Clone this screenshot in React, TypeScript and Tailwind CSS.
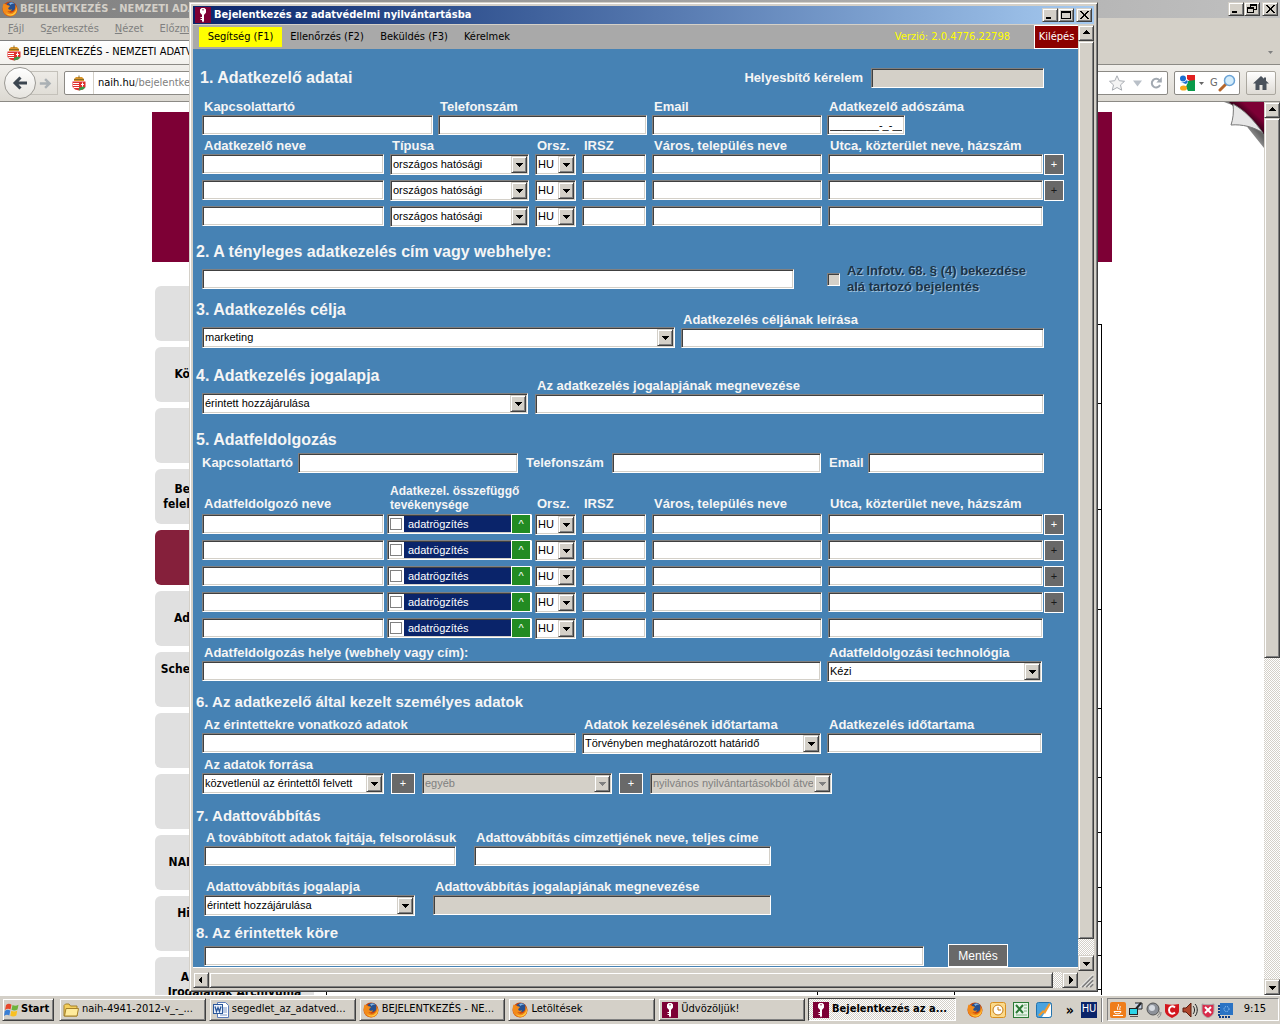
import type { ReactNode } from "react";

const tahoma = "font-['DejaVu_Sans_Condensed','Noto_Sans',sans-serif]";
const sunken =
  "border border-t-[#808080] border-l-[#808080] border-r-white border-b-white shadow-[inset_1px_1px_0_#404040,inset_-1px_-1px_0_#d4d0c8]";
const raised =
  "border border-t-[#d4d0c8] border-l-[#d4d0c8] border-r-[#404040] border-b-[#404040] shadow-[inset_1px_1px_0_#fff,inset_-1px_-1px_0_#808080] bg-[#d4d0c8]";
const dither = "bg-[repeating-conic-gradient(#fff_0_25%,#d4d0c8_0_50%)] bg-[length:2px_2px]";
const formGrid = "grid grid-cols-[182px_139px_41px_64px_170px_1fr] gap-x-[6px]";

/* ---------- icons ---------- */

const KeyIcon = () => (
  <svg viewBox="0 0 16 16" className="h-4 w-4 shrink-0" aria-hidden="true">
    <rect width="16" height="16" fill="#7d0035" />
    <path d="M6.500 1h3L11 2.500v3L9.500 7.500H9V14l-1 1.500L7 14v-1H5.500v-1H7v-1H5.500v-1H7V7.500H6.500L5 5.500v-3z" fill="#fff" />
    <rect x="7.500" y="2" width="1" height="1.500" fill="#7d0035" />
  </svg>
);

const FirefoxIcon = () => (
  <svg viewBox="0 0 16 16" className="h-4 w-4 shrink-0" aria-hidden="true">
    <circle cx="8" cy="8" r="7.500" fill="#c8470c" />
    <circle cx="9" cy="5.500" r="4.600" fill="#27508f" />
    <path d="M7 2c2-1 4.500-.5 5.500 1-2-.5-3 0-4 1z" fill="#7fb3e3" />
    <path d="M1.500 2.500C2 3.500 3.500 2.500 5 4c1 .5 2.800.3 2.800 1.200S6 6.500 6.200 7.500s2 1.800 3.800.8c-.5 2-3 2.700-4.500 1.700 1.500 2.500 6 2.300 7.500-1.200.7-1.800.5-3.500 0-4.800 2.500 2 3 6 .8 8.700S8 15.800 5 14.500 1 10.500.8 8.200s0-3.700.7-5.700z" fill="#f28a1a" />
    <path d="M14 5.500c1 3-.3 6-3.500 7.500-2.500 1-5 .3-6.500-1.500 1 3 5 3.800 8 2 2.500-1.700 3.500-5 2-8z" fill="#ffd042" />
  </svg>
);

const CrestIcon = () => (
  <svg viewBox="0 0 16 16" className="h-4 w-4 shrink-0" aria-hidden="true">
    <path d="M3 6V4l2-2h6l2 2v2z" fill="#d9952b" />
    <path d="M3 4.500h10M8 .500v2.500" stroke="#8a6a22" />
    <path d="M1.500 6.500h13V12L12 14.500l-4 1-4-1L1.500 12z" fill="#e0302e" />
    <path d="M2 8.500h6M2 10.500h6M2.500 12.500h5.500" stroke="#fff" />
    <path d="M11.500 7.500v5M10 9.500h3" stroke="#fff" />
    <path d="M8 13l3.500-1.500 3 1L12 14.500l-4 1z" fill="#3a9b47" />
  </svg>
);

const DownArrow = ({ disabled = false }: { disabled?: boolean }) => (
  <svg viewBox="0 0 7 4" className="h-1 w-[7px]" shapeRendering="crispEdges" aria-hidden="true">
    <path d="M0 0h7L3.500 4z" fill={disabled ? "#808080" : "#000"} />
  </svg>
);

const ScrollArrow = ({ d, label }: { d: string; label: string }) => (
  <button aria-label={label} className={`flex h-4 w-4 shrink-0 items-center justify-center ${raised}`}>
    <svg viewBox="0 0 8 8" className="h-2 w-2" shapeRendering="crispEdges" aria-hidden="true">
      <path d={d} />
    </svg>
  </button>
);

/* ---------- form controls ---------- */

type SelectProps = { id?: string; label?: string; value: string; disabled?: boolean; className?: string };

const Select = ({ id, label, value, disabled = false, className = "" }: SelectProps) => (
  <div className={`relative h-[21px] ${sunken} ${disabled ? "bg-[#d4d0c8]" : "bg-white"} ${className}`}>
    <select
      id={id}
      aria-label={label}
      disabled={disabled}
      defaultValue={value}
      className={`block h-full w-full appearance-none overflow-hidden bg-transparent pr-[18px] pb-px pl-[2px] opacity-100 outline-none ${
        disabled ? "text-[#808080]" : "text-black"
      }`}
    >
      <option>{value}</option>
    </select>
    <span className={`pointer-events-none absolute top-px right-px flex h-[17px] w-4 items-center justify-center ${raised}`}>
      <DownArrow disabled={disabled} />
    </span>
  </div>
);

type InputProps = { id?: string; label?: string; value?: string; disabled?: boolean; className?: string };

const Input = ({ id, label, value, disabled, className = "" }: InputProps) => (
  <input
    id={id}
    aria-label={label}
    type="text"
    defaultValue={value}
    disabled={disabled}
    className={`block h-5 min-w-0 px-[2px] outline-none ${sunken} ${disabled ? "bg-[#d4d0c8]" : "bg-white"} ${className}`}
  />
);

const Label = ({ htmlFor, children }: { htmlFor?: string; children: ReactNode }) => (
  <label htmlFor={htmlFor} className="block pl-[2px] text-[13px] leading-4 font-bold whitespace-nowrap text-[#f5f5f5]">
    {children}
  </label>
);

const Heading = ({ children, small = false }: { children: ReactNode; small?: boolean }) => (
  <h2
    className={`-ml-[6px] h-5 leading-5 font-bold whitespace-nowrap text-[#f5f5f5] ${small ? "text-[15px]" : "text-base"}`}
  >
    {children}
  </h2>
);

const PlusButton = ({ dim = false, className = "w-5" }: { dim?: boolean; className?: string }) => (
  <button
    aria-label="Új sor"
    className={`flex h-[21px] shrink-0 items-center justify-center border border-white bg-[#696969] text-[11px] leading-none ${
      dim ? "text-[#1a1a1a]" : "text-white"
    } ${className}`}
  >
    +
  </button>
);

const ColumnLabels = ({ children }: { children: ReactNode }) => (
  <>
    {children}
    <Label>Orsz.</Label>
    <Label>IRSZ</Label>
    <Label>Város, település neve</Label>
    <Label>Utca, közterület neve, házszám</Label>
  </>
);

const AddressCells = ({ plus }: { plus: "none" | "on" | "dim" }) => (
  <>
    <Select label="Orsz." value="HU" />
    <Input label="IRSZ" />
    <Input label="Város, település neve" />
    <div className="flex gap-px">
      <Input label="Utca, közterület neve, házszám" className="flex-1" />
      {plus === "none" ? <span className="w-5" /> : <PlusButton dim={plus === "dim"} />}
    </div>
  </>
);

const Form = () => (
  <form
    onSubmit={(e) => e.preventDefault()}
    className="min-h-0 flex-1 overflow-hidden bg-[#4682b4] pt-[19px] pr-[14px] pl-[9px] font-['Liberation_Sans',Arial,sans-serif] text-[11px]"
  >
    <div className="flex items-center gap-2 pr-5 pl-1">
      <Heading>1. Adatkezelő adatai</Heading>
      <div className="ml-auto">
        <Label htmlFor="helyesbito">Helyesbítő kérelem</Label>
      </div>
      <Input id="helyesbito" disabled className="w-[173px]" />
    </div>

    <div className="mt-[11px] flex gap-[5px]">
      <div className="w-[231px]">
        <Label htmlFor="kapcs">Kapcsolattartó</Label>
        <Input id="kapcs" className="w-full" />
      </div>
      <div className="w-[209px]">
        <Label htmlFor="tel">Telefonszám</Label>
        <Input id="tel" className="w-full" />
      </div>
      <div className="w-[170px]">
        <Label htmlFor="email">Email</Label>
        <Input id="email" className="w-full" />
      </div>
      <div>
        <Label htmlFor="adoszam">Adatkezelő adószáma</Label>
        <Input id="adoszam" value="________-_-__" className="w-[78px]" />
      </div>
    </div>

    <div className={`mt-[3px] ${formGrid}`}>
      <ColumnLabels>
        <Label>Adatkezelő neve</Label>
        <Label>Típusa</Label>
      </ColumnLabels>
    </div>
    <div className="flex flex-col gap-[6px]">
      {(["on", "dim", "none"] as const).map((plus) => (
        <div key={plus} className={`h-5 ${formGrid}`}>
          <Input label="Adatkezelő neve" />
          <Select label="Típusa" value="országos hatósági" />
          <AddressCells plus={plus} />
        </div>
      ))}
    </div>

    <div className="mt-4">
      <Heading>2. A tényleges adatkezelés cím vagy webhelye:</Heading>
    </div>
    <div className="mt-[7px] flex h-5 items-center">
      <Input label="A tényleges adatkezelés cím vagy webhelye" className="w-[592px]" />
      <input id="infotv" type="checkbox" disabled className={`ml-[33px] h-[13px] w-[13px] appearance-none bg-[#d4d0c8] ${sunken}`} />
      <label htmlFor="infotv" className="pl-[7px] text-[13px] leading-4 font-bold text-[#1b3348] [text-shadow:1px_1px_0_#9dc0dc]">
        Az Infotv. 68. § (4) bekezdése
        <br />
        alá tartozó bejelentés
      </label>
    </div>

    <div className="mt-[11px] flex items-end gap-[6px] pr-5">
      <div className="w-[473px]">
        <Heading>3. Adatkezelés célja</Heading>
        <Select label="Adatkezelés célja" value="marketing" className="mt-[7px]" />
      </div>
      <div className="flex-1">
        <Label htmlFor="cel">Adatkezelés céljának leírása</Label>
        <Input id="cel" className="w-full" />
      </div>
    </div>

    <div className="mt-[18px] flex items-end gap-[7px] pr-5">
      <div className="w-[326px]">
        <Heading>4. Adatkezelés jogalapja</Heading>
        <Select label="Adatkezelés jogalapja" value="érintett hozzájárulása" className="mt-[7px]" />
      </div>
      <div className="flex-1">
        <Label htmlFor="jogalap">Az adatkezelés jogalapjának megnevezése</Label>
        <Input id="jogalap" className="w-full" />
      </div>
    </div>

    <div className="mt-4">
      <Heading>5. Adatfeldolgozás</Heading>
    </div>
    <div className="mt-[3px] flex items-center pr-5">
      <div className="-ml-[2px] w-[98px]">
        <Label htmlFor="kapcs5">Kapcsolattartó</Label>
      </div>
      <Input id="kapcs5" className="w-[220px]" />
      <div className="w-[94px] pl-[6px]">
        <Label htmlFor="tel5">Telefonszám</Label>
      </div>
      <Input id="tel5" className="w-[209px]" />
      <div className="w-[47px] pl-[6px]">
        <Label htmlFor="email5">Email</Label>
      </div>
      <Input id="email5" className="flex-1" />
    </div>

    <div className={`mt-[11px] h-[30px] items-end pb-[2px] ${formGrid}`}>
      <ColumnLabels>
        <Label>Adatfeldolgozó neve</Label>
        <p className="text-xs leading-[14px] font-bold whitespace-nowrap text-[#f5f5f5]">
          Adatkezel. összefüggő
          <br />
          tevékenysége
        </p>
      </ColumnLabels>
    </div>
    <div className="flex flex-col gap-[6px]">
      {[0, 1, 2, 3, 4].map((row) => (
        <div key={row} className={`h-5 ${formGrid}`}>
          <Input label="Adatfeldolgozó neve" />
          <div className={`-mx-[3px] flex h-5 items-center bg-white pl-[2px] ${sunken}`}>
            <input
              id={`tev${row}`}
              type="checkbox"
              className="mr-[2px] h-3 w-3 shrink-0 appearance-none border border-[#808080] bg-white"
            />
            <label htmlFor={`tev${row}`} className="h-4 flex-1 bg-[#0a246a] pl-1 leading-4 text-white">
              adatrögzítés
            </label>
            <button aria-label="Lista" className="-my-px h-5 w-5 border border-white bg-[#228b22] leading-none text-white">
              ^
            </button>
          </div>
          <AddressCells plus={row === 0 ? "on" : row === 4 ? "none" : "dim"} />
        </div>
      ))}
    </div>

    <div className="mt-[7px] flex gap-[6px] pr-[22px]">
      <div className="w-[619px]">
        <Label htmlFor="helye">Adatfeldolgozás helye (webhely vagy cím):</Label>
        <Input id="helye" className="w-full" />
      </div>
      <div className="flex-1">
        <Label htmlFor="tech">Adatfeldolgozási technológia</Label>
        <Select id="tech" value="Kézi" />
      </div>
    </div>

    <div className="mt-[10px]">
      <Heading small>6. Az adatkezelő által kezelt személyes adatok</Heading>
    </div>
    <div className="mt-[5px] flex gap-[6px] pr-[22px]">
      <div className="w-[374px]">
        <Label htmlFor="erintett">Az érintettekre vonatkozó adatok</Label>
        <Input id="erintett" className="w-full" />
      </div>
      <div className="w-[239px]">
        <Label htmlFor="idotartam">Adatok kezelésének időtartama</Label>
        <Select id="idotartam" value="Törvényben meghatározott határidő" />
      </div>
      <div className="flex-1">
        <Label htmlFor="idotartam2">Adatkezelés időtartama</Label>
        <Input id="idotartam2" className="w-full" />
      </div>
    </div>
    <div className="mt-[3px]">
      <Label htmlFor="forras">Az adatok forrása</Label>
      <div className="flex gap-[7px]">
        <Select id="forras" value="közvetlenül az érintettől felvett" className="w-[182px]" />
        <PlusButton className="w-6" />
        <Select label="Az adatok forrása 2" value="egyéb" disabled className="w-[190px]" />
        <PlusButton className="w-6" />
        <Select label="Az adatok forrása 3" value="nyilvános nyilvántartásokból átvet" disabled className="w-[182px]" />
      </div>
    </div>

    <div className="mt-3">
      <Heading small>7. Adattovábbítás</Heading>
    </div>
    <div className="mt-1 flex gap-[18px] pl-[2px]">
      <div className="w-[252px]">
        <Label htmlFor="fajta">A továbbított adatok fajtája, felsorolásuk</Label>
        <Input id="fajta" className="w-full" />
      </div>
      <div className="w-[297px]">
        <Label htmlFor="cimzett">Adattovábbítás címzettjének neve, teljes címe</Label>
        <Input id="cimzett" className="w-full" />
      </div>
    </div>
    <div className="mt-[13px] flex gap-[18px] pl-[2px]">
      <div className="w-[211px]">
        <Label htmlFor="tjog">Adattovábbítás jogalapja</Label>
        <Select id="tjog" value="érintett hozzájárulása" />
      </div>
      <div className="w-[338px]">
        <Label htmlFor="tjognev">Adattovábbítás jogalapjának megnevezése</Label>
        <Input id="tjognev" disabled className="w-full" />
      </div>
    </div>

    <div className="mt-[7px]">
      <Heading small>8. Az érintettek köre</Heading>
    </div>
    <div className="mt-px flex items-center pl-[2px]">
      <Input label="Az érintettek köre" className="w-[720px]" />
      <button className="ml-6 h-[23px] w-[60px] border border-white bg-[#696969] text-xs text-white">Mentés</button>
    </div>
  </form>
);

const WindowButton = ({ d, label, className = "" }: { d: string; label: string; className?: string }) => (
  <button aria-label={label} className={`h-[14px] w-4 ${raised} ${className}`}>
    <svg viewBox="0 0 14 12" className="h-3 w-[14px]" fill="none" stroke="#000" aria-hidden="true">
      <path d={d} />
    </svg>
  </button>
);

const minimize = "M3 8.500h5M3 9.500h5";
const maximize = "M2.500 2v8M11.500 2v8M2 2.500h10M2 3.500h10M2 9.500h10";
const restore = "M5 1.500h7M5 2.500h7M11.500 2v5M9 6.500h3M5.500 2v2M2 4.500h7M2 5.500h7M2.500 5v5M8.500 5v5M2 9.500h7";
const close = "M3 2l8 8M4 2l8 8M11 2l-8 8M12 2l-8 8";

const Dialog = () => (
  <section
    className={`absolute top-[2px] right-[182px] bottom-8 left-[189px] flex flex-col overflow-hidden bg-[#d4d0c8] p-[3px] ${tahoma} text-[11px] ${raised}`}
  >
    <header className="flex h-[18px] shrink-0 items-center gap-[3px] bg-linear-to-r from-[#0a246a] to-[#a6caf0] pr-[2px] pl-[2px]">
      <KeyIcon />
      <h1 className="font-bold whitespace-nowrap text-white">Bejelentkezés az adatvédelmi nyilvántartásba</h1>
      <div className="ml-auto flex">
        <WindowButton label="Kis méret" d={minimize} />
        <WindowButton label="Teljes méret" d={maximize} />
        <WindowButton label="Bezárás" d={close} className="ml-[2px]" />
      </div>
    </header>
    <div className="mt-px flex min-h-0 flex-1">
      <div className="flex min-w-0 flex-1 flex-col">
        <nav className="flex h-6 shrink-0 items-center bg-[#a9a9a9] pl-[6px] whitespace-nowrap">
          <button className="h-5 w-[83px] bg-[#ffff00]">Segítség (F1)</button>
          <button className="w-[90px]">Ellenőrzés (F2)</button>
          <button className="w-[84px]">Beküldés (F3)</button>
          <button className="w-[62px]">Kérelmek</button>
          <span className="mr-6 ml-auto text-[#ffff00]">Verzió: 2.0.4776.22798</span>
          <button className="h-6 w-11 border border-r-0 border-white bg-[#8b0000] text-white">Kilépés</button>
        </nav>
        <Form />
        <div className="h-[5px] shrink-0 border-t border-white bg-[#d4d0c8]" />
        <div className={`flex h-4 shrink-0 ${dither}`}>
          <ScrollArrow label="Balra" d="M5 0v8L1 4z" />
          <div className={`mr-[9px] flex-1 ${raised}`} />
          <ScrollArrow label="Jobbra" d="M3 0v8l4-4z" />
        </div>
      </div>
      <div className="flex w-4 shrink-0 flex-col bg-[#d4d0c8]">
        <div className={`flex flex-1 flex-col ${dither}`}>
          <ScrollArrow label="Fel" d="M0 5h8L4 1z" />
          <div className={`mb-4 flex-1 ${raised}`} />
          <ScrollArrow label="Le" d="M0 3h8L4 7z" />
        </div>
        <svg viewBox="0 0 16 16" className="mt-px h-4 w-4" aria-hidden="true">
          <path d="M4 15L15 4M8 15l7-7M12 15l3-3" stroke="#808080" strokeWidth="2" />
          <path d="M2.500 15L15 2.500M6.500 15L15 6.500M10.500 15l4.500-4.500" stroke="#fff" />
        </svg>
      </div>
    </div>
  </section>
);

/* ---------- browser behind the dialog ---------- */

type SideItem = { text: string; active?: boolean; top?: boolean; wide?: boolean };

const sideItems: SideItem[] = [
  { text: "" },
  { text: "Kö" },
  { text: "" },
  { text: "Be\nfelel" },
  { text: "", active: true },
  { text: "Ad" },
  { text: "Sche", top: true },
  { text: "" },
  { text: "" },
  { text: "NAI" },
  { text: "Hi", top: true },
  { text: "Adatvédelmi bizt.\nIrodájának Archívuma", wide: true },
];

const tableRows = [79, 106, 100, 99, 69, 55, 55, 34, 34, 34, 34];

const Browser = () => (
  <div className={`flex min-h-0 flex-1 flex-col bg-[#d4d0c8] ${tahoma} text-[11px]`}>
    <header className="flex h-[18px] shrink-0 items-center gap-[2px] bg-linear-to-r from-[#808080] to-[#c0c0c0] px-[2px] font-bold text-[#d4d0c8]">
      <FirefoxIcon />
      <span className="flex-1 whitespace-nowrap">BEJELENTKEZÉS - NEMZETI ADA</span>
      <div className="flex">
        <WindowButton label="Kis méret" d={minimize} />
        <WindowButton label="Előző méret" d={restore} />
        <WindowButton label="Bezárás" d={close} className="ml-[2px]" />
      </div>
    </header>
    <nav className="flex h-[22px] shrink-0 items-center gap-4 pl-2 text-[#808080]">
      <span><u>F</u>ájl</span>
      <span>S<u>z</u>erkesztés</span>
      <span><u>N</u>ézet</span>
      <span>Előz<u>m</u>é</span>
    </nav>
    <div className="flex h-6 shrink-0 items-center justify-between pr-[7px]">
      <div className="flex h-full w-[260px] items-center gap-px rounded-tr-sm border-t border-[#808080] bg-linear-to-b from-white to-[#f3f1ed] pl-[6px] whitespace-nowrap">
        <CrestIcon />
        BEJELENTKEZÉS - NEMZETI ADATV
      </div>
      <svg viewBox="0 0 5 3" className="h-[3px] w-[5px]" aria-hidden="true">
        <path d="M0 0h5L2.500 3z" fill="#808080" />
      </svg>
    </div>
    <div className="flex h-[38px] shrink-0 items-center border-t border-b border-[#8c8a85] bg-linear-to-b from-[#f1efeb] to-[#dcd9d2] pr-1 pl-1">
      <button aria-label="Vissza" className="z-10 flex h-8 w-8 items-center justify-center rounded-full border border-[#9b9994] bg-linear-to-b from-white to-[#e6e4df]">
        <svg viewBox="0 0 16 16" className="h-4 w-4" fill="none" stroke="#3c4650" strokeWidth="3" aria-hidden="true">
          <path d="M8.500 2.500L3 8l5.500 5.500M3 8h12" />
        </svg>
      </button>
      <button aria-label="Előre" className="-ml-2 flex h-6 w-[30px] items-center justify-center border border-[#c4c1ba] pl-1">
        <svg viewBox="0 0 16 16" className="h-[13px] w-[13px]" fill="none" stroke="#aab0b4" strokeWidth="3" aria-hidden="true">
          <path d="M7.500 2.500L13 8l-5.500 5.500M13 8H1" />
        </svg>
      </button>
      <div className="ml-[6px] flex h-6 flex-1 items-center gap-2 rounded-xs border border-[#8c8a85] bg-white pr-[5px]">
        <span className="flex h-full w-[29px] items-center justify-center border-r border-[#d4d0c8]">
          <CrestIcon />
        </span>
        <span className="-ml-1 flex-1">
          naih.hu<span className="text-[#808080]">/bejelentke</span>
        </span>
        <svg viewBox="0 0 16 16" className="h-4 w-4" fill="#f4f4f4" stroke="#a9adb3" aria-hidden="true">
          <path d="M8 .8l2.200 4.900 5.300.6-4 3.600 1.200 5.300L8 12.500l-4.700 2.700 1.200-5.300-4-3.600 5.300-.6z" />
        </svg>
        <svg viewBox="0 0 9 7" className="h-[7px] w-[9px]" aria-hidden="true">
          <path d="M0 .5h9L4.500 6.500z" fill="#b9c0c8" />
        </svg>
        <svg viewBox="0 0 12 12" className="h-3 w-3" fill="none" stroke="#a2a9b1" strokeWidth="2" aria-hidden="true">
          <path d="M9.500 3.500A4.300 4.300 0 1 0 10 8" />
          <path d="M11.800 0v5.500H6.300z" fill="#a2a9b1" stroke="none" />
        </svg>
      </div>
      <div className="ml-[6px] flex h-6 w-[66px] items-center rounded-xs border border-[#8c8a85] bg-white pl-1 text-[#666]">
        <svg viewBox="0 0 16 16" className="h-4 w-4 shrink-0" aria-hidden="true">
          <path d="M8 0h8v6l-4 1-4-3z" fill="#e02020" />
          <path d="M9 6l7-1v11H9l-2-4z" fill="#0a9a4a" />
          <circle cx="4" cy="3.500" r="3" fill="#1b6fd0" />
          <path d="M0 8c3 1 5 0 8-4l1 4c-2 2-6 3-9 2z" fill="#fff" />
          <path d="M1 7c3 1 5 0 7-2l1 2-2 2z" fill="#1b6fd0" />
          <ellipse cx="4.500" cy="13" rx="3.500" ry="2.600" fill="#f7a81b" />
        </svg>
        <svg viewBox="0 0 5 3" className="mx-1 h-[3px] w-[5px] shrink-0" aria-hidden="true">
          <path d="M0 0h5L2.500 3z" fill="#666" />
        </svg>
        <span className="ml-[2px]">G</span>
        <svg viewBox="0 0 18 18" className="h-[18px] w-[18px] shrink-0" aria-hidden="true">
          <path d="M2 16l6-6" stroke="#b5652a" strokeWidth="3" strokeLinecap="round" />
          <circle cx="11.500" cy="6.500" r="5" fill="#d3ecfb" stroke="#6ba3d6" strokeWidth="1.500" />
        </svg>
      </div>
      <button aria-label="Kezdőlap" className="ml-[6px] flex h-6 w-[30px] items-center justify-center rounded-xs border border-[#aaa79f] bg-linear-to-b from-white to-[#dedbd5]">
        <svg viewBox="0 0 16 14" className="h-[14px] w-4" fill="#4a525c" aria-hidden="true">
          <path d="M8 0L0 7.500h2.500V14h4V9h3v5h4V7.500H16L13 4.700V1.500h-2v1.300z" />
        </svg>
      </button>
    </div>
    <div className="flex min-h-0 flex-1 bg-white">
      <main className="relative min-w-0 flex-1 overflow-hidden">
        <div className="mx-auto w-[960px] pt-[10px]">
          <div className="h-[150px] bg-[#7d0035]" />
          <div className="flex items-start">
            <ul className="mt-6 ml-[3px] flex w-[159px] shrink-0 flex-col gap-[6px]">
              {sideItems.map((item, i) => (
                <li
                  key={i}
                  className={`flex h-[55px] rounded-md text-xs leading-[15px] font-bold whitespace-pre-line ${
                    item.active ? "bg-[#85203b]" : "bg-[#e0e0e0]"
                  } ${item.top ? "items-start pt-[10px]" : "items-center"}`}
                >
                  <span className={item.wide ? "w-full text-center" : "w-[35px] text-right"}>{item.text}</span>
                </li>
              ))}
            </ul>
            <div className="mt-[62px] ml-3 w-[776px] border border-t-0 border-black">
              {tableRows.map((h, i) => (
                <div key={i} className="flex border-t border-black" style={{ height: h }}>
                  <span className="w-[491px] border-r border-black" />
                  <span className="w-[137px] border-r border-black" />
                </div>
              ))}
            </div>
          </div>
        </div>
        <svg viewBox="0 0 40 46" className="absolute top-0 right-0 h-[46px] w-10" aria-hidden="true">
          <defs>
            <linearGradient id="curl" x1="0" y1="1" x2="1" y2="0">
              <stop offset="0.450" stopColor="#200010" />
              <stop offset="0.700" stopColor="#7d0035" />
            </linearGradient>
            <linearGradient id="curlShade" x1="0" y1="1" x2="1" y2="0">
              <stop offset="0.200" stopColor="#fff" />
              <stop offset="0.600" stopColor="#666" />
            </linearGradient>
          </defs>
          <path d="M0 0L8 3 24 26 40 46V30L8 0z" fill="url(#curlShade)" />
          <path d="M5 0h35v32z" fill="url(#curl)" />
          <path d="M9 2c1 8 0 15-2 21 11-1 23 2 32 8C29 17 20 8 9 2z" fill="#e6e6e6" stroke="#777" />
        </svg>
      </main>
      <div className={`flex w-4 flex-col ${dither}`}>
        <ScrollArrow label="Fel" d="M0 5h8L4 1z" />
        <div className={`h-[540px] ${raised}`} />
        <div className="flex-1" />
        <ScrollArrow label="Le" d="M0 3h8L4 7z" />
      </div>
    </div>
  </div>
);

/* ---------- taskbar ---------- */

const FolderIcon = () => (
  <svg viewBox="0 0 16 16" className="h-4 w-4 shrink-0" aria-hidden="true">
    <path d="M1 3.500L2.500 2H6l1.500 2H14v10H1z" fill="#f5cf5b" stroke="#a5812a" />
    <path d="M3 6.500h12.500L14 14H1.500z" fill="#ffeb9c" stroke="#a5812a" />
  </svg>
);

const WordIcon = () => (
  <svg viewBox="0 0 16 16" className="h-4 w-4 shrink-0" aria-hidden="true">
    <path d="M4.500.500h8l3 3v12h-11z" fill="#fff" stroke="#5b7bb8" />
    <path d="M10 6h4M10 8h4M10 10h4M7 13h7" stroke="#7b96c8" />
    <rect x=".5" y="2.500" width="9" height="9" fill="#e9f0fb" stroke="#2b579a" />
    <path d="M2 4.500l1.500 5L5 5.500l1.500 4L8 4.500" fill="none" stroke="#2b579a" strokeWidth="1.300" />
  </svg>
);

const tasks = [
  { icon: <FolderIcon />, text: "naih-4941-2012-v_-_..." },
  { icon: <WordIcon />, text: "segedlet_az_adatved..." },
  { icon: <FirefoxIcon />, text: "BEJELENTKEZÉS - NE..." },
  { icon: <FirefoxIcon />, text: "Letöltések" },
  { icon: <KeyIcon />, text: "Üdvözöljük!" },
];

const tray = [
  <g key="java">
    <rect width="16" height="16" rx="2" fill="#ef7d1a" />
    <path d="M8 2c2 2-2 3 0 6M10 4c1 1-1 2 0 4M4 9.500h7c0 3-7 3-7 0M3 13.500h10" fill="none" stroke="#fff" />
  </g>,
  <g key="net">
    <path d="M7 1h7v6H9" fill="#c8d4e8" stroke="#222" />
    <path d="M13 1L7 8" stroke="#222" strokeWidth="2" />
    <rect x="1.500" y="6.500" width="8" height="6" fill="#2cd3e6" stroke="#222" />
    <path d="M2 14.500h8" stroke="#555" />
  </g>,
  <g key="sound">
    <circle cx="7" cy="7" r="6" fill="#8d9199" stroke="#555" />
    <circle cx="6" cy="6" r="3" fill="#d7dbe2" />
    <path d="M13 9c1 2 0 4-2 5M15 10c0 3-1 5-3 5.500" fill="none" stroke="#888" />
  </g>,
  <g key="comodo">
    <path d="M1 2c5 1 9 1 14 0v7c0 3-3 5-7 7-4-2-7-4-7-7z" fill="#d3161d" />
    <path d="M11 5.500C8 3 5 5 5 8s3 5 6 2.500" fill="none" stroke="#fff" strokeWidth="2" />
  </g>,
  <g key="volume">
    <path d="M1 6h3l5-5v14l-5-5H1z" fill="#b0472c" stroke="#5a1d0f" />
    <path d="M11 4c2 2 2 6 0 8M13 2c3 3 3 9 0 12" fill="none" stroke="#222" />
  </g>,
  <g key="shield">
    <path d="M2 2c4 1 8 1 12 0v7c0 3-2 5-6 7-4-2-6-4-6-7z" fill="#d92b4b" stroke="#aaa" />
    <path d="M5 5l6 6M11 5l-6 6" stroke="#fff" strokeWidth="2" />
  </g>,
  <g key="chip">
    <rect x="2" y="1" width="13" height="12" fill="#2a73c4" />
    <path d="M1 3v12h12" fill="none" stroke="#0b3c86" strokeWidth="2" strokeDasharray="2 1" />
    <circle cx="8.500" cy="7" r="2.500" fill="none" stroke="#9fd0ff" strokeDasharray="1 1" />
  </g>,
];

const Taskbar = () => (
  <footer className={`z-20 flex h-[29px] shrink-0 items-center border-t border-white bg-[#d4d0c8] pr-px pb-px pl-[2px] ${tahoma} text-[11px] whitespace-nowrap`}>
    <button className={`mr-[5px] flex h-[23px] w-[52px] shrink-0 items-center gap-px pl-px font-bold ${raised}`}>
      <svg viewBox="0 0 16 16" className="h-4 w-4 shrink-0" aria-hidden="true">
        <path d="M2 3c2-1.500 3.500-1.500 5.500-.3L6.500 7.500C4.500 6.500 3 6.500 1 8z" fill="#e8472a" />
        <path d="M8.500 3c2 1 4 1 6-.3L13.500 7.500c-2 1.300-4 1.300-6 .3z" fill="#6db33a" />
        <path d="M.8 9c2-1.500 3.500-1.500 5.500-.5l-1 5C3.500 12.500 2 12.500 0 14z" fill="#3a7fd5" />
        <path d="M7.300 8.800c2 1 4 1 6-.3l-1 5c-2 1.300-4 1.300-6 .3z" fill="#f8c022" />
      </svg>
      Start
    </button>
    <div className="flex min-w-0 flex-1 gap-[3px]">
      {tasks.map((task) => (
        <button key={task.text} className={`flex h-[23px] min-w-0 flex-1 items-center gap-[3px] overflow-hidden pl-[3px] ${raised}`}>
          {task.icon}
          {task.text}
        </button>
      ))}
      <button
        className={`flex h-[23px] min-w-0 flex-1 items-center gap-[3px] overflow-hidden border border-t-[#404040] border-l-[#404040] border-r-white border-b-white pl-1 font-bold ${dither}`}
      >
        <KeyIcon />
        Bejelentkezés az a...
      </button>
    </div>
    <div className="ml-[11px] flex shrink-0 items-center gap-[7px]">
      <FirefoxIcon />
      <svg viewBox="0 0 16 16" className="h-4 w-4" aria-hidden="true">
        <rect x=".5" y=".5" width="15" height="15" rx="2" fill="#fbd98a" stroke="#d9901f" />
        <circle cx="8" cy="8" r="5" fill="#fff" stroke="#c47a15" />
        <path d="M8 5v3h3" fill="none" stroke="#c47a15" />
      </svg>
      <svg viewBox="0 0 16 16" className="h-4 w-4" aria-hidden="true">
        <rect x=".5" y=".5" width="15" height="15" fill="#e6f3e7" stroke="#2c7a36" />
        <path d="M11 3h3M11 6h3M11 9h3M3 13h11" stroke="#7fb184" />
        <path d="M3 3l7 8M10 3l-7 8" stroke="#2c7a36" strokeWidth="2" />
      </svg>
      <svg viewBox="0 0 16 16" className="h-4 w-4" aria-hidden="true">
        <rect x=".5" y=".5" width="15" height="15" rx="2" fill="#4ba3df" stroke="#2473ad" />
        <path d="M6 15L14 2l1 1v11l-2 1z" fill="#fff" />
        <path d="M2 13l5-5 1 1 5-8 1.500 1.500L9 12l-1.500-1.500L4 14z" fill="#f39a2c" />
      </svg>
    </div>
    <span className="ml-[14px] text-sm leading-4 font-bold">»</span>
    <span className="ml-[7px] flex h-4 w-4 items-center justify-center bg-[#0a246a] text-white">HU</span>
    <span className="mr-1 ml-1 h-6 w-[2px] border-l border-[#808080] bg-white" />
    <div className="flex h-[23px] w-[172px] shrink-0 items-center gap-[2px] border border-t-[#808080] border-l-[#808080] border-r-white border-b-white pl-[2px]">
      {tray.map((icon, i) => (
        <svg key={i} viewBox="0 0 16 16" className="h-4 w-4 shrink-0" aria-hidden="true">
          {icon}
        </svg>
      ))}
      <span className="mr-3 ml-auto">9:15</span>
    </div>
  </footer>
);

export default function App() {
  return (
    <div className="relative flex h-screen flex-col overflow-hidden text-black">
      <Browser />
      <Dialog />
      <Taskbar />
    </div>
  );
}
